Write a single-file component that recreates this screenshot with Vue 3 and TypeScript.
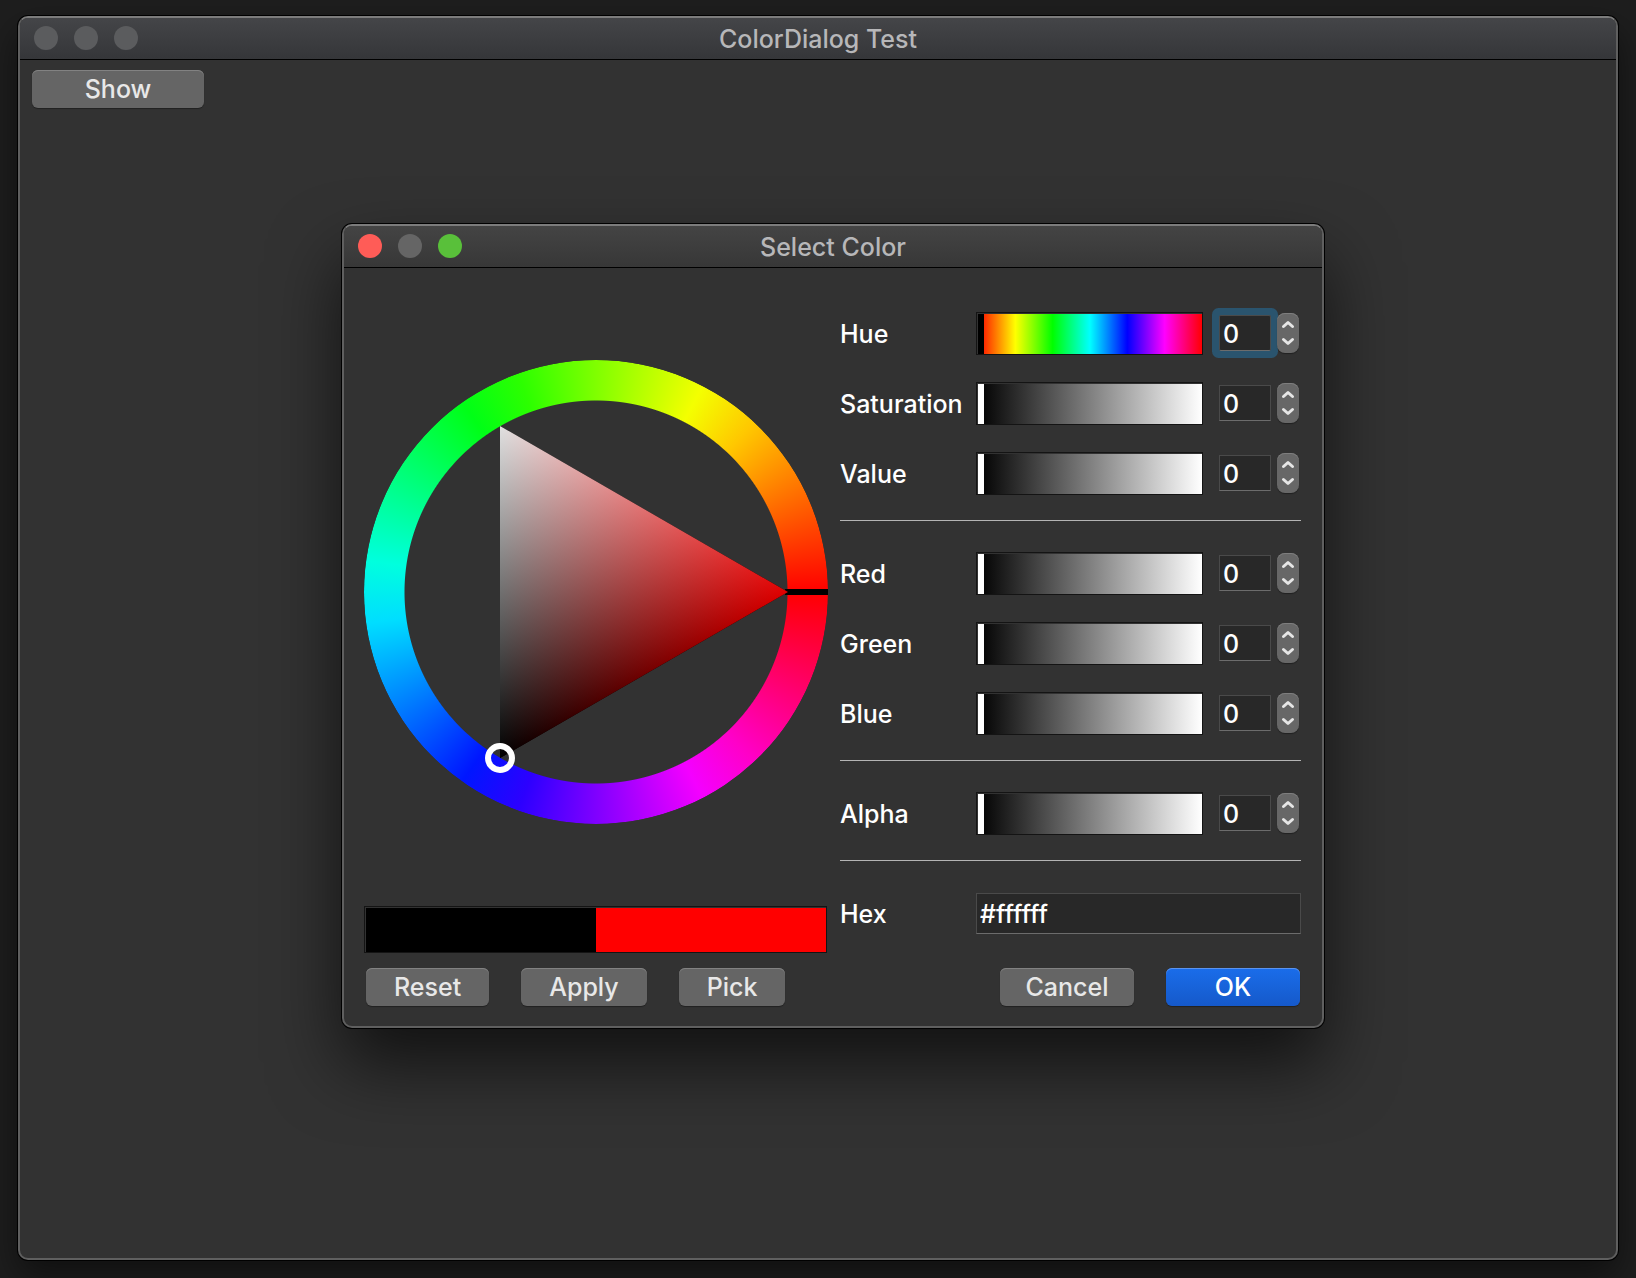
<script setup lang="ts">
import { reactive, ref } from 'vue'

interface Channel {
  id: string
  label: string
  max: number
  value: number
}

const groups = reactive<Channel[][]>([
  [
    { id: 'hue', label: 'Hue', max: 359, value: 0 },
    { id: 'saturation', label: 'Saturation', max: 255, value: 0 },
    { id: 'value', label: 'Value', max: 255, value: 0 },
  ],
  [
    { id: 'red', label: 'Red', max: 255, value: 0 },
    { id: 'green', label: 'Green', max: 255, value: 0 },
    { id: 'blue', label: 'Blue', max: 255, value: 0 },
  ],
  [{ id: 'alpha', label: 'Alpha', max: 255, value: 0 }],
])

const hex = ref('#ffffff')
const active = ref('hue')

// The ring is sampled at evenly spaced hues, counter-clockwise from red.
const HUE_SEGMENTS = 23
const hueStops = Array.from(
  { length: HUE_SEGMENTS + 1 },
  (_, i) => `hsl(${360 - (i * 360) / HUE_SEGMENTS}, 100%, 50%)`,
)
const ringBackground = `conic-gradient(from 90deg, ${hueStops.join(', ')})`

function step(channel: Channel, delta: number): void {
  channel.value = Math.min(channel.max, Math.max(0, channel.value + delta))
}
</script>

<template>
  <div class="desktop">
    <main class="window main-window">
      <header class="titlebar">
        <div class="lights"><span class="light" /><span class="light" /><span class="light" /></div>
        <h1 class="title">ColorDialog Test</h1>
      </header>
      <div class="main-body">
        <button class="button show" type="button">Show</button>
      </div>
    </main>

    <section class="window dialog" role="dialog" aria-labelledby="dialog-title">
      <header class="titlebar">
        <div class="lights">
          <span class="light close" /><span class="light" /><span class="light zoom" />
        </div>
        <h2 id="dialog-title" class="title">Select Color</h2>
      </header>

      <div class="dialog-body">
        <div class="panes">
          <div class="picker">
            <div class="wheel-area">
              <div class="wheel">
                <div class="ring" :style="{ background: ringBackground }" />
                <svg class="wheel-overlay" viewBox="0 0 464 464" aria-hidden="true">
                  <defs>
                    <linearGradient id="red-part" gradientUnits="userSpaceOnUse" x1="136" y1="398" x2="280" y2="149">
                      <stop offset="0" stop-color="#000000" />
                      <stop offset="1" stop-color="#e00000" />
                    </linearGradient>
                    <linearGradient id="cyan-part" gradientUnits="userSpaceOnUse" x1="280" y1="315" x2="136" y2="66">
                      <stop offset="0" stop-color="#000000" />
                      <stop offset="1" stop-color="#00e0e0" />
                    </linearGradient>
                  </defs>
                  <rect x="421" y="229" width="43" height="6" fill="#000" />
                  <g class="triangle">
                    <polygon points="136,66 424,232 136,398" fill="url(#red-part)" />
                    <polygon class="screen" points="136,66 424,232 136,398" fill="url(#cyan-part)" />
                  </g>
                  <circle cx="136" cy="398" r="12" fill="none" stroke="#fff" stroke-width="6" />
                </svg>
              </div>
            </div>
            <div class="swatch"><span class="old" /><span class="new" /></div>
          </div>

          <form class="channels" @submit.prevent>
            <div v-for="(group, index) in groups" :key="index" class="group">
              <div v-for="c in group" :key="c.id" class="row">
                <label class="label" :for="c.id">{{ c.label }}</label>
                <input
                  v-model.number="c.value"
                  class="slider"
                  :class="{ rainbow: c.id === 'hue' }"
                  type="range"
                  min="0"
                  :max="c.max"
                  :aria-label="c.label + ' slider'"
                />
                <div class="spin">
                  <input
                    :id="c.id"
                    v-model.number="c.value"
                    class="field number"
                    :class="{ focused: active === c.id }"
                    type="text"
                    inputmode="numeric"
                    @focus="active = c.id"
                  />
                  <div class="stepper">
                    <button type="button" :aria-label="'Increase ' + c.label" @click="step(c, 1)">
                      <svg viewBox="0 0 22 20"><path d="M6.500 13.500 11 9.500l4.500 4" /></svg>
                    </button>
                    <button type="button" :aria-label="'Decrease ' + c.label" @click="step(c, -1)">
                      <svg viewBox="0 0 22 20"><path d="M6.500 6.500 11 10.500l4.500-4" /></svg>
                    </button>
                  </div>
                </div>
              </div>
            </div>
            <div class="row">
              <label class="label" for="hex">Hex</label>
              <input id="hex" v-model="hex" class="field hex" type="text" spellcheck="false" />
            </div>
          </form>
        </div>

        <footer class="actions">
          <button class="button" type="button">Reset</button>
          <button class="button" type="button">Apply</button>
          <button class="button" type="button">Pick</button>
          <span class="spacer" />
          <button class="button wide" type="button">Cancel</button>
          <button class="button wide primary" type="button">OK</button>
        </footer>
      </div>
    </section>
  </div>
</template>

<style>
body {
  margin: 0;
  background: #1e1e1e;
}
</style>

<style scoped>
.desktop,
.desktop * {
  box-sizing: border-box;
}
.desktop {
  position: relative;
  display: flex;
  min-height: 100vh;
  padding: 16px 18px 18px;
  overflow: hidden;
  font-family: Inter, "Liberation Sans", sans-serif;
  font-size: 25px;
  font-weight: 500;
  line-height: 30px;
  color: #fff;
}
.window {
  display: flex;
  flex-direction: column;
  border: 2px solid #5f5f5f;
  border-top-color: #7c7c7c;
  border-radius: 10px;
  background: #323232;
}
.main-window {
  flex: 1;
  box-shadow: 0 0 0 1px #000, 0 16px 36px rgba(0, 0, 0, 0.5);
}
.dialog {
  position: absolute;
  top: 224px;
  left: 342px;
  right: 312px;
  min-width: 982px;
  box-shadow: 0 0 0 1px #000, 0 36px 70px rgba(0, 0, 0, 0.65);
}
.titlebar {
  display: grid;
  grid-template-columns: 1fr auto 1fr;
  align-items: center;
  height: 42px;
  padding: 0 14px;
  border-bottom: 1px solid #000;
  border-radius: 8px 8px 0 0;
  background: linear-gradient(#444548, #353639);
}
.dialog .titlebar {
  background: linear-gradient(#444, #373737);
}
.lights {
  display: flex;
  gap: 16px;
  padding-bottom: 1px;
}
.light {
  width: 24px;
  height: 24px;
  border-radius: 50%;
  background: #5b5c5e;
}
.dialog .light {
  background: #656565;
}
.dialog .close {
  background: #ff5c57;
}
.dialog .zoom {
  background: #59c03a;
}
.title {
  margin: 0;
  font-size: 25px;
  font-weight: 500;
  color: #b7b7b9;
}
.main-body {
  padding: 10px 12px;
}
.button {
  height: 38px;
  padding: 0 28px;
  border: 0;
  border-radius: 6px;
  background: #656565;
  box-shadow: inset 0 1px #828282, 0 1px 1px rgba(0, 0, 0, 0.35);
  font: inherit;
  color: #e8e8e8;
}
.show {
  width: 172px;
}
.wide {
  width: 134px;
  padding: 0;
}
.primary {
  background: linear-gradient(#1a6dea, #1559ca);
  box-shadow: inset 0 1px #5b93ee, 0 1px 1px rgba(0, 0, 0, 0.35);
  color: #fff;
}
.dialog-body {
  padding: 10px 21px 20px 20px;
}
.panes {
  display: flex;
  gap: 12px;
}
.picker {
  display: flex;
  flex-direction: column;
  width: 464px;
}
.wheel-area {
  display: flex;
  flex: 1;
  align-items: center;
}
.wheel {
  position: relative;
  width: 464px;
  height: 464px;
}
.ring {
  height: 100%;
  border-radius: 50%;
  mask: radial-gradient(circle, transparent 191px, #000 192px);
}
.wheel-overlay {
  position: absolute;
  inset: 0;
  width: 100%;
  height: 100%;
}
.triangle {
  isolation: isolate;
}
.screen {
  mix-blend-mode: screen;
}
.swatch {
  display: flex;
  height: 47px;
  margin-right: 1px;
  padding: 1px 0 0 1px;
  border: 1px solid #141414;
}
.swatch span {
  flex: 1;
}
.old {
  background: #000;
}
.new {
  background: #f00;
}
.channels {
  flex: 1;
  min-width: 0;
  padding: 34px 0 18px;
}
.group {
  display: flex;
  flex-direction: column;
  gap: 27px;
  margin-bottom: 31px;
  padding-bottom: 25px;
  border-bottom: 1px solid #b4b4b4;
}
.row {
  display: flex;
  align-items: center;
  min-height: 43px;
}
.label {
  flex: none;
  width: 136px;
}
.slider {
  flex: 1;
  min-width: 0;
  height: 43px;
  margin: 0;
  padding: 1px 0 0 1px;
  border: 1px solid #141414;
  background: linear-gradient(90deg, #000, #fff) content-box;
  appearance: none;
}
.slider.rainbow {
  background: linear-gradient(90deg, #f00, #ff0, #0f0, #0ff, #00f, #f0f, #f00) content-box;
}
.slider::-webkit-slider-thumb {
  width: 6px;
  height: 40px;
  background: #fff;
  appearance: none;
}
.slider.rainbow::-webkit-slider-thumb {
  background: #000;
}
.spin {
  display: flex;
  gap: 6px;
  align-items: center;
  height: 43px;
  margin-left: 16px;
  padding: 0 2px 1px 0;
}
.field {
  border: 1px solid #4a4a4a;
  border-bottom-color: #6c6c6c;
  border-radius: 0;
  outline: 0;
  background: #282828;
  font: inherit;
  color: #fff;
}
.number {
  width: 52px;
  height: 36px;
  padding: 2px 3px 0;
}
.number.focused {
  border-radius: 2px;
  box-shadow: 0 0 0 7px #2a546e;
}
.hex {
  flex: 1;
  min-width: 0;
  height: 41px;
  padding: 0 3px;
}
.stepper {
  position: relative;
  display: flex;
  flex-direction: column;
  width: 22px;
  height: 40px;
  border-radius: 8px;
  background: #676767;
  box-shadow: inset 0 1px #7e7e7e, 0 1px 1px rgba(0, 0, 0, 0.35);
}
.stepper button {
  flex: 1;
  padding: 0;
  border: 0;
  background: none;
}
.stepper svg {
  display: block;
  width: 22px;
  height: 20px;
}
.stepper path {
  fill: none;
  stroke: #e6e6e6;
  stroke-width: 3;
  stroke-linecap: round;
  stroke-linejoin: round;
}
.actions {
  display: flex;
  gap: 32px;
  padding: 15px 1px 0 2px;
}
.spacer {
  flex: 1;
}
</style>
